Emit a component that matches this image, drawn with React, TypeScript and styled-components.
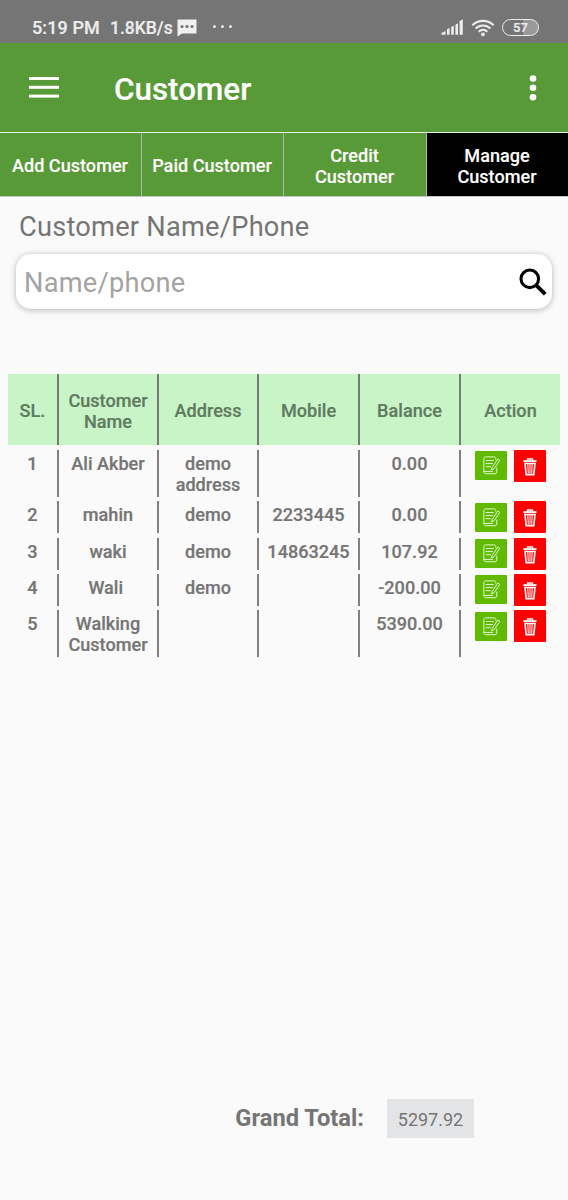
import React from 'react';
import styled, { createGlobalStyle } from 'styled-components';

interface Customer {
    name: string;
    address: string;
    mobile: string;
    balance: string;
    tall?: boolean;
}

const customers: Customer[] = [
    { name: 'Ali Akber', address: 'demo address', mobile: '', balance: '0.00', tall: true },
    { name: 'mahin', address: 'demo', mobile: '2233445', balance: '0.00' },
    { name: 'waki', address: 'demo', mobile: '14863245', balance: '107.92' },
    { name: 'Wali\u00a0', address: 'demo', mobile: '', balance: '-200.00' },
    { name: 'Walking Customer', address: '', mobile: '', balance: '5390.00', tall: true },
];

const tabs = ['Add Customer', 'Paid Customer', 'Credit Customer', 'Manage Customer'];
const columns = ['SL.', 'Customer Name', 'Address', 'Mobile', 'Balance', 'Action'];

const MessageIcon = () => (
    <svg width="20" height="18" viewBox="0 0 20 18">
        <path d="M0.5 0.5H19.5V14.5H5L0.5 17.5Z" fill="#f0f0f0" />
        <circle cx="5" cy="7.5" r="1.6" fill="#757575" />
        <circle cx="10" cy="7.5" r="1.6" fill="#757575" />
        <circle cx="15" cy="7.5" r="1.6" fill="#757575" />
    </svg>
);

const SignalIcon = () => (
    <svg width="23" height="17" viewBox="0 0 23 17" fill="#ededed">
        <path d="M0.5 15.8V14L4.5 12V15.8Z" />
        <path d="M6 15.8V10.2L8.6 9V15.8Z" />
        <path d="M10.2 15.8V8L12.8 6.8V15.8Z" />
        <path d="M14.4 15.8V5.8L17 4.3V15.8Z" />
        <path d="M18.6 15.8V2L21.8 0.3V15.8Z" />
    </svg>
);

const WifiIcon = () => (
    <svg width="24" height="18" viewBox="0 0 24 18" fill="none" stroke="#ededed" strokeWidth="2.1">
        <path d="M1.3 6.3C7.2 0.4 16.8 0.4 22.7 6.3" />
        <path d="M4.6 9.5C8.8 5.4 15.2 5.4 19.4 9.5" />
        <path d="M7.7 12.7C10.2 10.3 13.8 10.3 16.3 12.7" />
        <circle cx="12" cy="15.3" r="1.9" fill="#ededed" stroke="none" />
    </svg>
);

const MenuIcon = () => (
    <svg width="30" height="22" viewBox="0 0 30 22" fill="#fff">
        <rect y="0" width="30" height="3" />
        <rect y="8.8" width="30" height="3" />
        <rect y="17.6" width="30" height="3" />
    </svg>
);

const MoreIcon = () => (
    <svg width="8" height="26" viewBox="0 0 8 26" fill="#fff">
        <circle cx="4" cy="3.5" r="3.3" />
        <circle cx="4" cy="12.8" r="3.3" />
        <circle cx="4" cy="22.2" r="3.3" />
    </svg>
);

const SearchIcon = () => (
    <svg width="28" height="28" viewBox="0 0 28 28" fill="none" stroke="#000">
        <circle cx="10.8" cy="10.8" r="8.8" strokeWidth="3.1" />
        <path d="M17.3 17.3L26.2 26.2" strokeWidth="3.8" />
    </svg>
);

const EditIcon = () => (
    <svg width="18" height="19" viewBox="0 0 18 19" fill="none" stroke="#e4f7cf" strokeWidth="1" strokeLinecap="round" strokeLinejoin="round">
        <path d="M12.8 3.2V2.4C12.8 1.5 12 0.9 11.2 0.9H2.4C1.4 0.9 0.9 1.5 0.9 2.4V15.4M13.8 12V16C13.8 17 13.2 17.7 12.2 17.7H2.9C1.7 17.7 0.9 17 0.9 15.4H9.6" />
        <path d="M3.1 4.5H10.4M3.1 7.6H9.5M3.1 10.7H7.5" />
        <path d="M9.4 11.2L14.8 3L16.8 4.3L11.3 12.5L8.9 13.8Z" />
    </svg>
);

const TrashIcon = () => (
    <svg width="14" height="18" viewBox="0 0 14 18" fill="none" stroke="#fff">
        <path d="M0.5 3.1H13.5" strokeWidth="1.9" />
        <path d="M4.5 2.6V1H9.5V2.6" strokeWidth="1.3" />
        <path d="M2 5.5L3.2 16.6H10.8L12 5.5Z" strokeWidth="1.6" />
        <path d="M4.8 6L5.3 15.5M7 6V15.5M9.2 6L8.7 15.5" strokeWidth="1" />
    </svg>
);

const App: React.FC = () => {
    return (
        <>
            <GlobalStyle />
            <Screen>
                <StatusBar>
                    <Clock>5:19 PM</Clock>
                    <Speed>1.8KB/s</Speed>
                    <MessageIcon />
                    <Dots><i /><i /><i /></Dots>
                    <StatusRight>
                        <SignalIcon />
                        <WifiIcon />
                        <Battery>57</Battery>
                    </StatusRight>
                </StatusBar>
                <AppBar>
                    <MenuIcon />
                    <Title>Customer</Title>
                    <MoreIcon />
                </AppBar>
                <Tabs>
                    {tabs.map((tab, i) => (
                        <Tab key={tab} $active={i === 3}>{tab}</Tab>
                    ))}
                </Tabs>
                <SearchLabel>Customer Name/Phone</SearchLabel>
                <SearchBox>
                    <Placeholder>Name/phone</Placeholder>
                    <SearchIcon />
                </SearchBox>
                <Table>
                    <HeadRow>
                        {columns.map((col) => (
                            <HeadCell key={col}><span>{col}</span></HeadCell>
                        ))}
                    </HeadRow>
                    {customers.map((c, i) => (
                        <Row key={c.name} $tall={c.tall}>
                            <Cell>{i + 1}</Cell>
                            <Cell>{c.name}</Cell>
                            <Cell>{c.address}</Cell>
                            <Cell>{c.mobile}</Cell>
                            <Cell>{c.balance}</Cell>
                            <Actions>
                                <EditButton><EditIcon /></EditButton>
                                <DeleteButton><TrashIcon /></DeleteButton>
                            </Actions>
                        </Row>
                    ))}
                </Table>
                <Footer>
                    <TotalLabel>Grand Total:</TotalLabel>
                    <TotalValue>5297.92</TotalValue>
                </Footer>
            </Screen>
        </>
    );
}

const GlobalStyle = createGlobalStyle`
  * {
    box-sizing: border-box;
  }

  body {
    margin: 0;
    font-family: Roboto, sans-serif;
  }

  svg {
    display: block;
    flex: none;
  }
`;

const Screen = styled.div`
  width: 568px;
  height: 1200px;
  display: flex;
  flex-direction: column;
  background: #fafafa;
  color: #757575;
  overflow: hidden;
`;

const StatusBar = styled.div`
  height: 43px;
  padding: 12px 29px 0 32px;
  display: flex;
  align-items: center;
  background: #757575;
  color: #ededed;
  font-size: 18px;
  font-weight: 500;
  white-space: nowrap;
  -webkit-text-stroke: 0.2px;
`;

const Clock = styled.div`
  width: 78px;
  letter-spacing: 0.1px;
`;

const Speed = styled.div`
  width: 67px;
  font-size: 17.5px;
`;

const Dots = styled.div`
  margin: 0 0 2px 16px;
  display: flex;
  gap: 5px;

  i {
    width: 3px;
    height: 3px;
    border-radius: 50%;
    background: #ededed;
  }
`;

const StatusRight = styled.div`
  margin-left: auto;
  display: flex;
  align-items: center;
  gap: 7px;
`;

const Battery = styled.div`
  width: 37px;
  height: 17px;
  border: 1.5px solid #ededed;
  border-radius: 9px;
  background: linear-gradient(90deg, #757575 57%, #999 57%);
  font-size: 13px;
  line-height: 15px;
  text-align: center;
`;

const AppBar = styled.div`
  height: 89px;
  padding: 0 31px 0 29px;
  display: flex;
  align-items: center;
  background: #589a37;
`;

const Title = styled.h1`
  flex: 1;
  margin: 5px 0 0 55px;
  color: #fff;
  font-size: 31.4px;
  font-weight: 500;
  line-height: 38px;
  -webkit-text-stroke: 0.15px;
`;

const Tabs = styled.div`
  height: 65px;
  display: grid;
  grid-template-columns: 141px 142px 143px 1fr;
  border-top: 1px solid #e4efdf;
  border-bottom: 1px solid #c5cbc2;
`;

const Tab = styled.div<{ $active: boolean }>`
  display: flex;
  align-items: center;
  justify-content: center;
  padding: 2px 21px 0 20px;
  border-left: 1px solid #b0b8ab;
  background: ${(p) => (p.$active ? '#000' : '#589a37')};
  color: #fff;
  font-size: 18.1px;
  font-weight: 500;
  line-height: 21px;
  text-align: center;
  -webkit-text-stroke: 0.1px;

  &:first-child {
    padding: 2px 1px 0 0;
    border-left: none;
  }

  &:nth-child(2) {
    padding: 2px 1px 0 0;
  }
`;

const SearchLabel = styled.div`
  margin: 14px 0 0 19px;
  font-size: 27.2px;
  line-height: 33px;
  letter-spacing: 0.25px;
`;

const SearchBox = styled.div`
  margin: 10px 16px 0;
  height: 55px;
  padding: 0 5px 0 8px;
  display: flex;
  align-items: center;
  justify-content: space-between;
  border-radius: 15px;
  background: #fff;
  box-shadow: 0 1px 6px rgba(0, 0, 0, 0.28);
`;

const Placeholder = styled.div`
  padding-top: 2px;
  color: #a3a3a3;
  font-size: 27.2px;
  letter-spacing: 0.25px;
`;

const Table = styled.div`
  margin: 65px 8px 0;
  font-size: 18.1px;
  font-weight: 500;
  line-height: 21.3px;
  text-align: center;
  -webkit-text-stroke: 0.2px;
`;

const HeadRow = styled.div`
  height: 71px;
  margin-bottom: 5px;
  display: grid;
  grid-template-columns: 49px 100px 100px 101px 101px 1fr;
  background: #c8f4c8;
  color: #5f7a5f;
  line-height: 21px;
`;

const HeadCell = styled.div`
  display: flex;
  align-items: center;
  justify-content: center;
  padding-top: 2px;

  & + & {
    border-left: 2px solid #777b76;
  }
`;

const Row = styled.div<{ $tall?: boolean }>`
  height: ${(p) => (p.$tall ? '47px' : '32px')};
  margin-bottom: 4.3px;
  display: grid;
  grid-template-columns: 49px 100px 100px 101px 101px 1fr;
`;

const Cell = styled.div`
  padding-top: 3px;

  & + & {
    border-left: 2px solid #857f7f;
  }
`;

const Actions = styled.div`
  display: flex;
  align-items: flex-start;
  gap: 7px;
  padding-left: 14px;
  border-left: 2px solid #857f7f;
`;

const ActionButton = styled.div`
  width: 32px;
  display: flex;
  align-items: center;
  justify-content: center;
  border-radius: 1px;
`;

const EditButton = styled(ActionButton)`
  height: 29px;
  margin-top: 1.4px;
  padding-left: 2px;
  background: #5fba00;
`;

const DeleteButton = styled(ActionButton)`
  height: 32px;
  padding-top: 2px;
  background: #fe0000;
`;

const Footer = styled.div`
  margin: auto 94px 62px auto;
  display: flex;
  align-items: center;
  gap: 23px;
`;

const TotalLabel = styled.div`
  padding-bottom: 2px;
  font-size: 23.7px;
  font-weight: 700;
`;

const TotalValue = styled.div`
  width: 87px;
  height: 39px;
  background: #e3e4e5;
  font-size: 18px;
  line-height: 41px;
  text-align: center;
`;

export default App;
